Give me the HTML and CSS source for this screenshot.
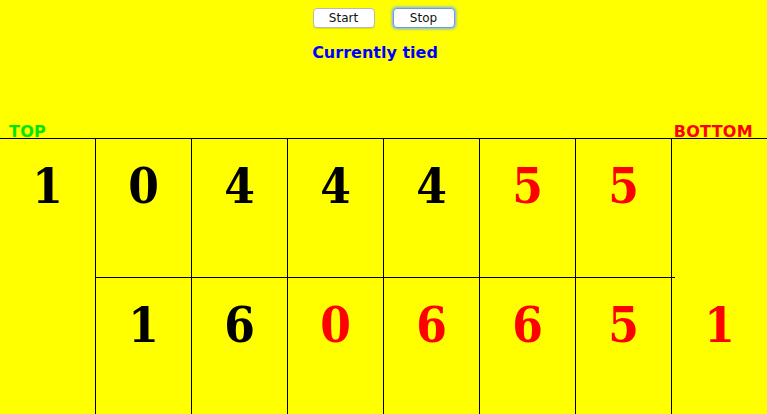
FILE: index.html
```html
<!DOCTYPE html>
<html>
<head>
<meta charset="utf-8">
<link rel="stylesheet" href="styles.css">
</head>
<body>
<div class="controls">
  <button class="btn">Start</button>
  <button class="btn focused">Stop</button>
</div>
<div class="status">Currently tied</div>
<div class="labels">
  <span class="lbl top">TOP</span>
  <span class="lbl bottom">BOTTOM</span>
</div>
<div class="board">
  <div class="store left"><span class="num black">1</span></div>
  <div class="pit t"><span class="num black">0</span></div>
  <div class="pit t"><span class="num black">4</span></div>
  <div class="pit t"><span class="num black">4</span></div>
  <div class="pit t"><span class="num black">4</span></div>
  <div class="pit t"><span class="num red">5</span></div>
  <div class="pit t last"><span class="num red">5</span></div>
  <div class="store right"><span class="num red">1</span></div>
  <div class="pit b"><span class="num black">1</span></div>
  <div class="pit b"><span class="num black">6</span></div>
  <div class="pit b"><span class="num red">0</span></div>
  <div class="pit b"><span class="num red">6</span></div>
  <div class="pit b"><span class="num red">6</span></div>
  <div class="pit b"><span class="num red">5</span></div>
</div>
</body>
</html>
```
FILE: styles.css
```css
html, body {
  margin: 0;
  padding: 0;
  background: #ffff00;
  height: 100%;
  overflow: hidden;
}
body {
  font-family: "DejaVu Sans", sans-serif;
}
.controls {
  display: flex;
  justify-content: center;
  gap: 18px;
  padding-top: 8px;
}
.btn {
  width: 62px;
  height: 20px;
  box-sizing: border-box;
  background: #ffffff;
  border: 1px solid #b9b9b9;
  border-radius: 4px;
  font-family: "DejaVu Sans", sans-serif;
  font-size: 12px;
  color: #111;
  padding: 0;
  line-height: 17px;
  box-shadow: 0 1px 1px rgba(0,0,0,0.12);
}
.btn.focused {
  border-color: #6f9fca;
  box-shadow: 0 0 0 1px #9cc3e6, 0 0 2px 2px rgba(120,170,220,0.5);
}
.status {
  margin-top: 15px;
  padding-right: 17px;
  text-align: center;
  font-weight: bold;
  font-size: 16px;
  color: #0000ff;
  height: 19px;
  line-height: 19px;
}
.labels {
  display: flex;
  justify-content: space-between;
  padding: 0 14px 0 9px;
  margin-top: 60px;
  height: 16px;
  line-height: 20px;
}
.lbl {
  font-weight: bold;
  font-size: 16px;
  letter-spacing: 0.3px;
}
.lbl.top { color: #00e600; }
.lbl.bottom { color: #ff0000; }
.board {
  display: grid;
  grid-template-columns: 96px repeat(6, 96px) 95px;
  grid-template-rows: 139px 140px;
  border-top: 1px solid #000;
}
.store, .pit {
  text-align: center;
  box-sizing: border-box;
}
.store.left {
  grid-column: 1;
  grid-row: 1 / span 2;
  border-right: 1px solid #000;
}
.store.right {
  grid-column: 8;
  grid-row: 1 / span 2;
  padding-top: 139px;
}
.pit {
  border-right: 1px solid #000;
}
.pit.t {
  grid-row: 1;
  border-bottom: 1px solid #000;
  position: relative;
}
.pit.t.last::after {
  content: "";
  position: absolute;
  right: -4px;
  bottom: -1px;
  width: 3px;
  height: 1px;
  background: #000;
}
.pit.b {
  grid-row: 2;
}
.num {
  display: block;
  font-family: "DejaVu Serif", serif;
  font-stretch: condensed;
  font-weight: bold;
  font-size: 49px;
  line-height: 49px;
  padding-top: 23px;
}
.black { color: #000; }
.red { color: #ff0000; }
```
